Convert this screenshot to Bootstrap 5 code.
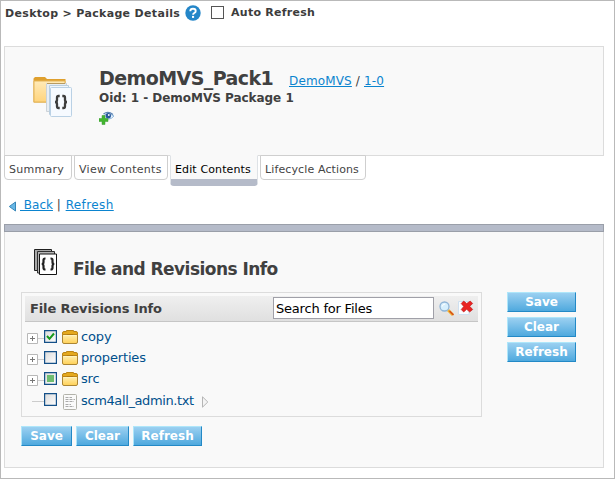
<!DOCTYPE html>
<html lang="en">
<head>
<meta charset="utf-8">
<meta name="viewport" content="width=device-width, initial-scale=1">
<title>Package Details</title>
<link rel="stylesheet" href="https://cdn.jsdelivr.net/npm/bootstrap@5.3.0/dist/css/bootstrap.min.css">
<style>
body { font-family: "DejaVu Sans", sans-serif; font-size: 12px; line-height: 16px; color: #404040; background: #fff; overflow: hidden; }
svg { display: block; flex: none; }
a { color: #0b84cf; }
.svg-defs { position: absolute; width: 0; height: 0; }
.app-frame { height: 479px; border: 1px solid #b9b9b9; padding: 0 10px 0 3px; }
.crumb-bar { height: 45px; padding: 4px 0 0 1px; font-size: 11px; font-weight: 700; color: #3c3c3c; }
.crumb-path { letter-spacing: .33px; width: 180px; padding-top: 1px; }
.auto-label { letter-spacing: .27px; }
.plain-check { width: 13px; height: 13px; border: 1px solid #555; margin: 1px 7px 0 10px; background: #fff; }
.pack-head { height: 110px; border: 1px solid #dcdcdc; background: #f9f9f9; padding: 19px 0 0 28px; }
.pack-text { padding-left: 26px; }
.pack-name { font-size: 19px; line-height: 24px; font-weight: 700; letter-spacing: -.58px; width: 190px; margin: 0; }
.pack-links { padding-top: 5px; letter-spacing: .15px; }
.pack-oid { font-weight: 700; line-height: 16px; letter-spacing: -.03px; }
.tab-row { height: 38px; margin-top: -1px; gap: 2px; border: 0; }
.tab-row .nav-link { height: 25px; padding: 6px 0 0 4px; line-height: 15px; font-size: 11px; letter-spacing: .28px; color: #444; background: #fff; border: 1px solid #cfcfcf; border-radius: 0 0 4px 4px; margin: 0; white-space: nowrap; }
.tab-row .nav-link.active { height: 31px; color: #000; background: #f9f9f9; border-top-color: #f9f9f9; border-bottom: 7px solid #b5bbc9; letter-spacing: .12px; }
.tab-row .nav-link.w-life { letter-spacing: .12px; }
.w-sum { width: 68px; } .w-view { width: 94px; } .w-edit { width: 88px; } .w-life { width: 106px; }
.back-row { height: 31px; padding: 4px 0 0 4px; }
.back-row a.nav-refresh { letter-spacing: .4px; margin-left: 1px; }
.back-arrow { margin: 3px 0 0 1px; }
.back-links { padding-left: 3px; }
.panel-bar { height: 8px; background: #b5bbc9; border: 1px solid #9a9fa9; }
.panel-body { height: 236px; background: #f9f9f9; border: 1px solid #dcdcdc; border-top: 0; padding: 17px 27px 0 16px; }
.title-row { height: 43px; }
.title-icon { margin-left: 13px; }
.panel-title { font-size: 17px; line-height: 24px; font-weight: 700; letter-spacing: -.54px; margin: 8px 0 0 15px; }
.tree-box { width: 461px; height: 125px; border: 1px solid #dcdcdc; padding: 3px; }
.tree-head { height: 26px; background: linear-gradient(#efefef, #e0e0e0); border-bottom: 1px solid #c6c6c6; padding: 0 6px 0 5px; }
.tree-title { flex: none; font-size: 13px; font-weight: 700; letter-spacing: -.12px; width: 243px; margin: 0; }
.search-input { flex: none; width: 161px; height: 22px; border: 1px solid #a0a0a8; border-radius: 0; padding: 2px 2px 0; margin-bottom: 2px; font-size: 13px; letter-spacing: -.2px; color: #000; background: #fff; }
.search-input:focus { box-shadow: none; }
.find-icon { margin-left: 5px; }
.wipe-icon { margin: 0 0 2px 3px; }
.tree-list { padding: 4px 0 0 2px; }
.tree-item { height: 21px; font-size: 13px; color: #00508c; }
.kind-icon { margin-left: 5px; }
.tree-label { letter-spacing: -.15px; margin-left: 3px; }
.tree-label.file-label { letter-spacing: -.38px; padding-top: 2px; }
.bottom-actions { margin-top: 9px; }
.btn-sky { height: 20px; padding: 0; border-radius: 0; border: 1px solid; border-color: #aee6fa #2389c6 #2389c6 #aee6fa; background: linear-gradient(#9bd0f1, #4fa9de); color: #fff; font-size: 12px; font-weight: 700; line-height: 18px; }
.btn-sky:hover { color: #fff; }
.side-actions { width: 69px; gap: 5px; }
.w-save { width: 51px; } .w-clear { width: 53px; } .w-refresh { width: 69px; }
</style>
</head>
<body>
<svg class="svg-defs">
  <defs>
    <linearGradient id="gFolder" x2="0" y2="1"><stop stop-color="#fff0b4"/><stop offset="1" stop-color="#ffd056"/></linearGradient>
    <linearGradient id="gBig" x2="0" y2="1"><stop stop-color="#ffeab8"/><stop offset="1" stop-color="#ffd47c"/></linearGradient>
    <linearGradient id="gBox" x2="1" y2="1"><stop stop-color="#dadada"/><stop offset="1" stop-color="#fff"/></linearGradient>
  </defs>
  <symbol id="folder" viewBox="0 0 16 14">
    <path d="M.5 4.500V12Q.500 13.500 2 13.500H14Q15.500 13.500 15.500 12V4.500Z" fill="url(#gFolder)" stroke="#ab8534"/>
    <path d="M.5 4.500V3Q.500 1.500 2 1.500H4.500V.500H11.500V1.500H14Q15.500 1.500 15.500 3V4.500Z" fill="#e5a91e" stroke="#ba8417"/>
    <path d="M5 4.500H11" stroke="#b27a0f"/><path d="M2 5.500H14" stroke="#fff3c0"/>
  </symbol>
  <symbol id="expander" viewBox="0 0 17 11">
    <path d="M.5.5H10.500V10.500H.500Z" fill="#fff" stroke="#b8b8b8"/><path d="M3 5.500H8M5.500 3V8" stroke="#777"/><path d="M11 5.500H17" stroke="#ccc"/>
  </symbol>
  <symbol id="box" viewBox="0 0 13 13"><path d="M.5.5H12.500V12.500H.500Z" fill="url(#gBox)" stroke="#145088" stroke-width="1.400"/></symbol>
</svg>

<div class="app-frame">
  <div class="crumb-bar d-flex align-items-start">
    <div class="crumb-path text-nowrap">Desktop &gt; Package Details</div>
    <svg width="16" height="16" viewBox="0 0 16 16"><circle cx="8" cy="8" r="7.700" fill="#2486c8"/><path d="M5.300 6.200Q5.400 3.800 8 3.800Q10.700 3.800 10.700 6Q10.700 7.300 9.300 8Q8.100 8.700 8.100 9.700" fill="none" stroke="#fff" stroke-width="1.900"/><path d="M7 10.900H9.100V12.900H7Z" fill="#fff"/></svg>
    <input class="form-check-input plain-check rounded-0" type="checkbox" id="autoRefresh">
    <label class="auto-label" for="autoRefresh">Auto Refresh</label>
  </div>

  <header class="pack-head d-flex">
    <svg class="mt-2" width="40" height="44" viewBox="0 0 40 44">
      <path d="M.5 7V4.500L2 3H12L14 5H32.500V28.500H.500Z" fill="#dfa02e"/>
      <path d="M1 7H32V28H1Z" fill="url(#gBig)" stroke="#e3b558"/>
      <path d="M13.500 9.500H33.500V37.500H13.500Z" fill="#e8eef4" stroke="#ccd3d8"/><path d="M14 9.500H32" stroke="#b89b60"/>
      <path d="M16.500 11.500H35.500V40.500H16.500Z" fill="#f0f6fc" stroke="#bacfe0"/>
      <rect x="17.500" y="13.500" width="21" height="29" rx="1" fill="#f6faff" stroke="#bad1e5"/>
      <path d="M26.700 22H25.500Q24 22 24 23.700V26Q24 28 22 28Q24 28 24 30V32.300Q24 34 25.500 34H26.700M29.300 22H30.500Q32 22 32 23.700V26Q32 28 34 28Q32 28 32 30V32.300Q32 34 30.500 34H29.300" fill="none" stroke="#3d3d3d" stroke-width="2.300"/>
    </svg>
    <div class="pack-text">
      <div class="d-flex align-items-center">
        <h1 class="pack-name">DemoMVS_Pack1</h1>
        <div class="pack-links"><a href="#">DemoMVS</a> / <a href="#">1-0</a></div>
      </div>
      <div class="pack-oid">Oid: 1 - DemoMVS Package 1</div>
      <svg class="mt-1" width="16" height="16" viewBox="0 0 16 16">
        <path d="M4 6.500Q8 1.500 15 6Q10 12 4 6.500Z" fill="#e3f0fd" stroke="#91b7da"/><path d="M4.500 4Q9 .500 14 4.500" fill="none" stroke="#5b84b4" stroke-width="1.200"/><circle cx="9.300" cy="5.700" r="2.700" fill="#28589a"/><circle cx="9.800" cy="5" r=".9" fill="#fff"/>
        <path d="M3 5.500H6V8.500H9V11.500H6V14.500H3V11.500H0V8.500H3Z" fill="#43b52f" stroke="#3a9c35" stroke-width=".5"/>
      </svg>
    </div>
  </header>

  <nav class="nav nav-tabs tab-row align-items-start flex-nowrap">
    <a class="nav-link w-sum" href="#">Summary</a>
    <a class="nav-link w-view" href="#">View Contents</a>
    <a class="nav-link w-edit active" href="#">Edit Contents</a>
    <a class="nav-link w-life" href="#">Lifecycle Actions</a>
  </nav>

  <div class="back-row d-flex">
    <svg class="back-arrow" width="8" height="12" viewBox="0 0 8 12"><path d="M6.500 2V11L.3 6.500Z" fill="#69b7e5" stroke="#3887b8"/></svg>
    <div class="back-links"><a href="#">&nbsp;Back</a> | <a class="nav-refresh" href="#">Refresh</a></div>
  </div>

  <div class="panel-bar"></div>
  <section class="panel-body">
    <div class="d-flex align-items-start title-row">
      <svg class="title-icon" width="24" height="27" viewBox="0 0 24 27">
        <path d="M.5.5H17.500V21.500H.500Z" fill="#a8a8a8" stroke="#202020"/><path d="M3.500 2.500H20.500V24H3.500Z" fill="#b5b5b5" stroke="#303030"/><path d="M5.500 5H22.500V25.500H5.500Z" fill="#fff" stroke="#151515"/>
        <path d="M11.500 9.500H11Q9.500 9.500 9.500 11.200V13.200Q9.500 15 7.700 15Q9.500 15 9.500 16.800V18.800Q9.500 20.500 11 20.500H11.500M16.500 9.500H17Q18.500 9.500 18.500 11.200V13.200Q18.500 15 20.300 15Q18.500 15 18.500 16.800V18.800Q18.500 20.500 17 20.500H16.500" fill="none" stroke="#222" stroke-width="2.200"/>
      </svg>
      <h2 class="panel-title">File and Revisions Info</h2>
    </div>
    <div class="d-flex justify-content-between">
      <div>
        <div class="tree-box">
          <div class="tree-head d-flex align-items-center">
            <h3 class="tree-title">File Revisions Info</h3>
            <input class="form-control search-input" type="text" value="Search for Files" aria-label="Search for Files">
            <svg class="find-icon" width="16" height="16" viewBox="0 0 16 16"><path d="M9 9L14 14" stroke="#f0b02c" stroke-width="2.800"/><path d="M10.500 10L14.500 14" stroke="#d4471c" stroke-width="1.300"/><circle cx="5.500" cy="5.500" r="4.500" fill="#d6effd" stroke="#8fb4d6" stroke-width="1.300"/><path d="M3.200 5.500Q3.700 3 6.200 3" stroke="#fff" fill="none"/></svg>
            <svg class="wipe-icon" width="16" height="16" viewBox="0 0 16 16"><path d="M.5 1.500H11V14.500H.500Z" fill="#fafdff" stroke="#cfe0f0"/><path d="M3.200 3.500L5.700 1L8.700 3.500L12.200 1L14.700 3.500L11.700 6.300L14.700 9.500L11.700 12L8.700 9.300L5.700 12L3.200 9.500L5.700 6.500Z" fill="#e92323" stroke="#b91717" stroke-width=".6"/></svg>
          </div>
          <div class="tree-list">
            <div class="tree-item d-flex align-items-center">
              <svg class="mt-1" width="17" height="11"><use href="#expander"/></svg>
              <svg width="13" height="13"><use href="#box"/><path d="M3 6L5.500 8.800L10 3.500" fill="none" stroke="#16991b" stroke-width="2"/></svg>
              <svg class="kind-icon" width="16" height="14"><use href="#folder"/></svg>
              <span class="tree-label">copy</span>
            </div>
            <div class="tree-item d-flex align-items-center">
              <svg class="mt-1" width="17" height="11"><use href="#expander"/></svg>
              <svg width="13" height="13"><use href="#box"/></svg>
              <svg class="kind-icon" width="16" height="14"><use href="#folder"/></svg>
              <span class="tree-label">properties</span>
            </div>
            <div class="tree-item d-flex align-items-center">
              <svg class="mt-1" width="17" height="11"><use href="#expander"/></svg>
              <svg width="13" height="13"><use href="#box"/><path d="M3 3H10V10H3Z" fill="#6fbd70"/></svg>
              <svg class="kind-icon" width="16" height="14"><use href="#folder"/></svg>
              <span class="tree-label">src</span>
            </div>
            <div class="tree-item d-flex align-items-center">
              <svg class="mt-1" width="17" height="11"><path d="M5 5.500H17" stroke="#ccc"/></svg>
              <svg width="13" height="13"><use href="#box"/></svg>
              <svg class="kind-icon mt-1" width="16" height="16" viewBox="-1 0 16 16"><rect x=".5" y=".5" width="13" height="15" rx="1" fill="#fafafa" stroke="#b2b2aa"/><path d="M2.500 3.500H9M2.500 5.500H12M2.500 7.500H11M2.500 10.500H8M2.500 12.500H11" stroke="#aaa" stroke-dasharray="3 1"/></svg>
              <span class="tree-label file-label">scm4all_admin.txt</span>
              <svg class="ms-2 mt-1" width="7" height="12" viewBox="0 0 7 12"><path d="M.5.8V11.200L5.800 6Z" fill="#f4f4f4" stroke="#b5b5b5"/></svg>
            </div>
          </div>
        </div>
        <div class="d-flex bottom-actions gap-1">
          <button class="btn btn-sky w-save" type="button">Save</button>
          <button class="btn btn-sky w-clear" type="button">Clear</button>
          <button class="btn btn-sky w-refresh" type="button">Refresh</button>
        </div>
      </div>
      <div class="d-flex flex-column side-actions">
        <button class="btn btn-sky" type="button">Save</button>
        <button class="btn btn-sky" type="button">Clear</button>
        <button class="btn btn-sky" type="button">Refresh</button>
      </div>
    </div>
  </section>
</div>
<script src="https://cdn.jsdelivr.net/npm/bootstrap@5.3.0/dist/js/bootstrap.bundle.min.js"></script>
</body>
</html>
